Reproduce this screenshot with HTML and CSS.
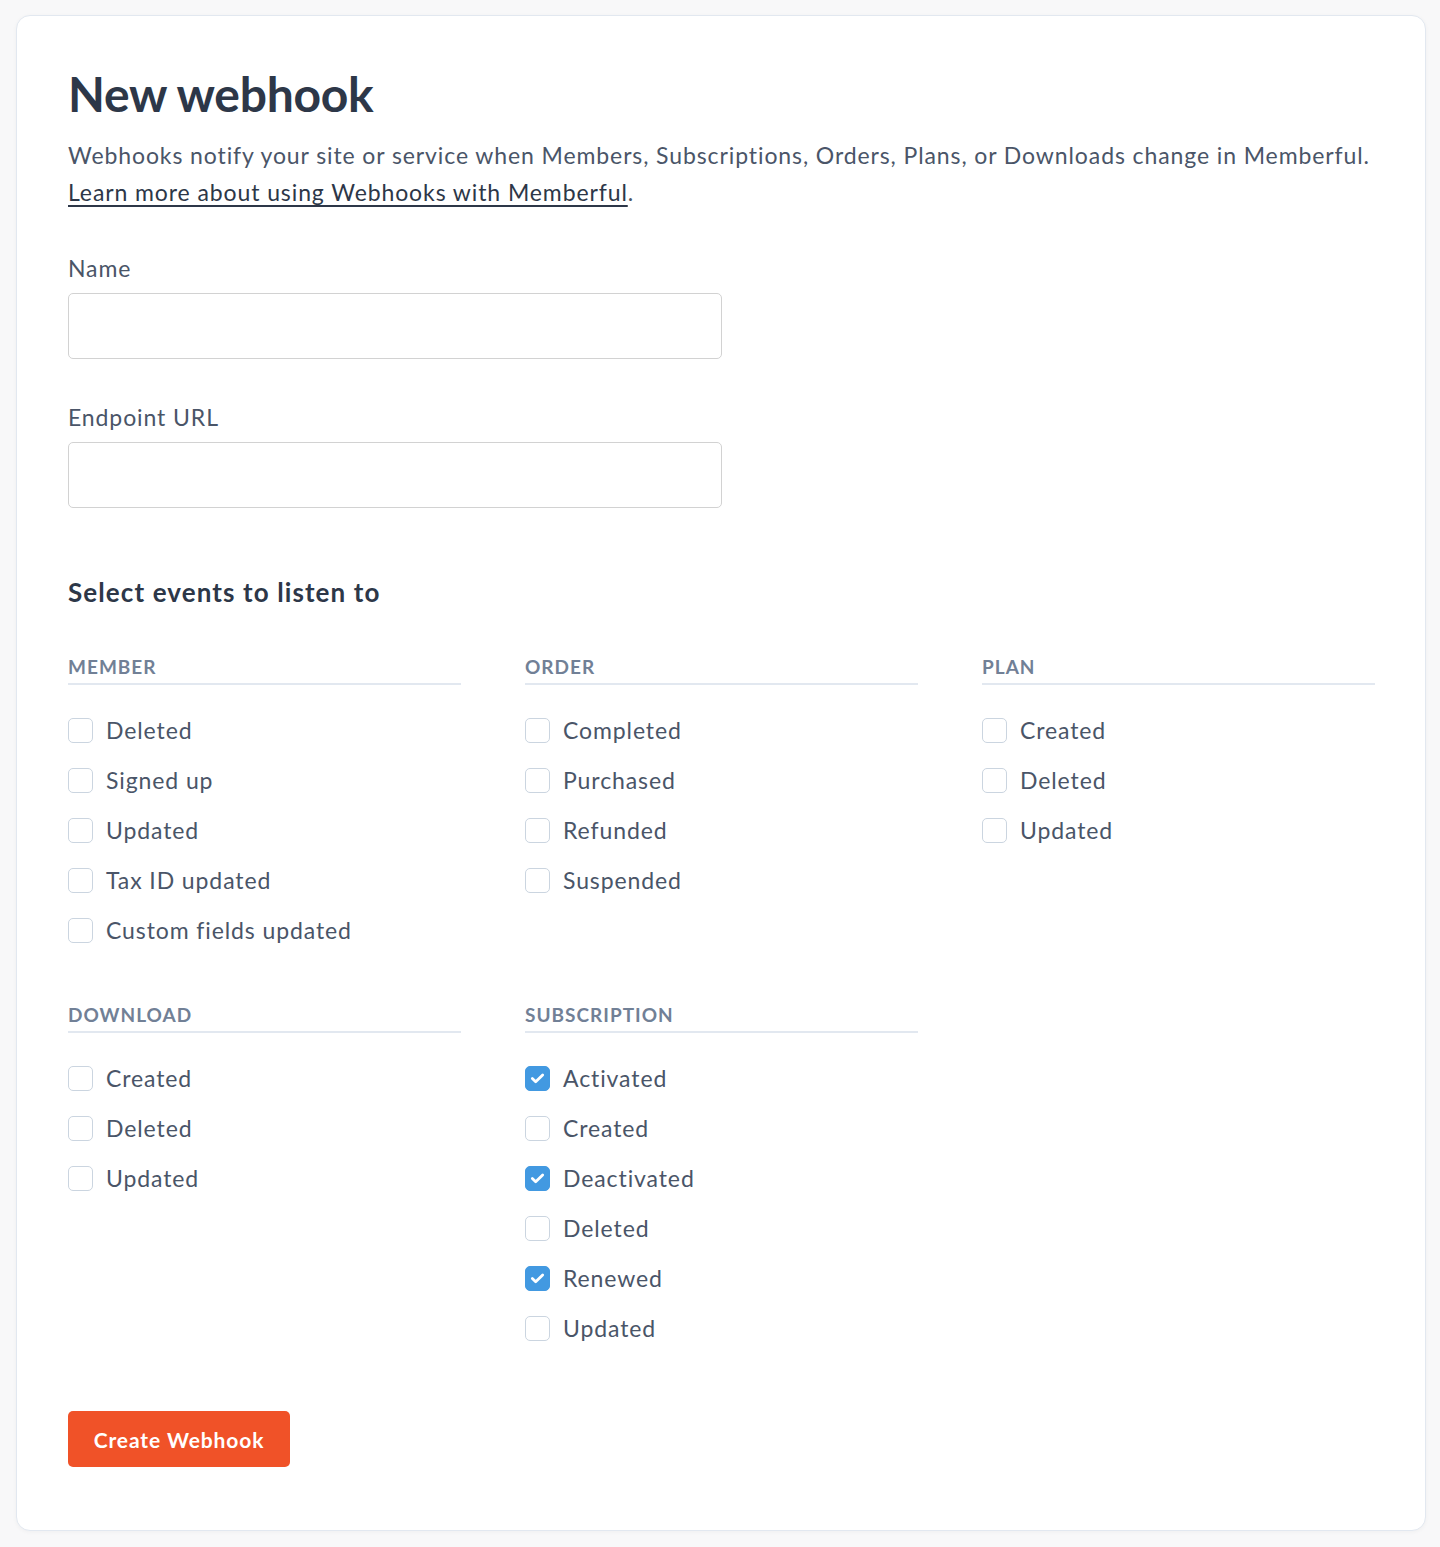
FILE: index.html
```html
<!DOCTYPE html>
<html lang="en">
<head>
<meta charset="utf-8">
<title>New webhook</title>
<link rel="stylesheet" href="styles.css">
</head>
<body>
<div class="card">
  <h1 class="title">New webhook</h1>
  <p class="desc">Webhooks notify your site or service when Members, Subscriptions, Orders, Plans, or Downloads change in Memberful.<br><a href="#" class="link">Learn more about using Webhooks with Memberful</a>.</p>

  <div class="field">
    <label class="label">Name</label>
    <input class="input" type="text">
  </div>
  <div class="field">
    <label class="label">Endpoint URL</label>
    <input class="input" type="text">
  </div>

  <h2 class="subtitle">Select events to listen to</h2>

  <div class="groups">
    <div class="group">
      <div class="group-head">Member</div>
      <label class="opt"><span class="box"></span>Deleted</label>
      <label class="opt"><span class="box"></span>Signed up</label>
      <label class="opt"><span class="box"></span>Updated</label>
      <label class="opt"><span class="box"></span>Tax ID updated</label>
      <label class="opt"><span class="box"></span>Custom fields updated</label>
    </div>
    <div class="group">
      <div class="group-head">Order</div>
      <label class="opt"><span class="box"></span>Completed</label>
      <label class="opt"><span class="box"></span>Purchased</label>
      <label class="opt"><span class="box"></span>Refunded</label>
      <label class="opt"><span class="box"></span>Suspended</label>
    </div>
    <div class="group">
      <div class="group-head">Plan</div>
      <label class="opt"><span class="box"></span>Created</label>
      <label class="opt"><span class="box"></span>Deleted</label>
      <label class="opt"><span class="box"></span>Updated</label>
    </div>
    <div class="group">
      <div class="group-head">Download</div>
      <label class="opt"><span class="box"></span>Created</label>
      <label class="opt"><span class="box"></span>Deleted</label>
      <label class="opt"><span class="box"></span>Updated</label>
    </div>
    <div class="group">
      <div class="group-head">Subscription</div>
      <label class="opt"><span class="box checked"><svg viewBox="0 0 24 24" width="24" height="24"><path d="M6.6 12.6l3.5 3.4L17.4 8.8" fill="none" stroke="#fff" stroke-width="2.9" stroke-linecap="round" stroke-linejoin="round"/></svg></span>Activated</label>
      <label class="opt"><span class="box"></span>Created</label>
      <label class="opt"><span class="box checked"><svg viewBox="0 0 24 24" width="24" height="24"><path d="M6.6 12.6l3.5 3.4L17.4 8.8" fill="none" stroke="#fff" stroke-width="2.9" stroke-linecap="round" stroke-linejoin="round"/></svg></span>Deactivated</label>
      <label class="opt"><span class="box"></span>Deleted</label>
      <label class="opt"><span class="box checked"><svg viewBox="0 0 24 24" width="24" height="24"><path d="M6.6 12.6l3.5 3.4L17.4 8.8" fill="none" stroke="#fff" stroke-width="2.9" stroke-linecap="round" stroke-linejoin="round"/></svg></span>Renewed</label>
      <label class="opt"><span class="box"></span>Updated</label>
    </div>
  </div>

  <button class="btn" type="button">Create Webhook</button>
</div>
</body>
</html>
```

FILE: styles.css
```css
* { box-sizing: border-box; }
html, body { margin: 0; padding: 0; }
body {
  background: #f8f8f9;
  font-family: Lato, "Open Sans", Arial, sans-serif;
  color: #2d3748;
  padding: 15px 14px 17px 16px;
}
.card {
  background: #fff;
  border: 1px solid #e2e8f0;
  border-radius: 14px;
  box-shadow: 0 1px 4px rgba(0,0,0,0.04);
  padding: 49px 51px 63px 51px;
}
.title {
  margin: 0;
  font-size: 48px;
  font-weight: 700;
  line-height: 57px;
  color: #2d3748;
  letter-spacing: -0.3px;
}
.desc {
  margin: 15px 0 0;
  font-size: 23px;
  line-height: 37px;
  letter-spacing: 0.9px;
  color: #4a5568;
}
.link { color: #2d3748; text-decoration: underline; text-underline-offset: 4px; text-decoration-thickness: 1.5px; }
.field { margin-top: 42px; display: flex; flex-direction: column; }
.field + .field { margin-top: 43px; }
.label {
  font-size: 23px;
  line-height: 30px;
  letter-spacing: 0.9px;
  color: #4a5568;
  margin-bottom: 10px;
}
.input {
  width: 654px;
  height: 66px;
  border: 1.5px solid #d2d2d2;
  border-radius: 5px;
  background: #fff;
  font: inherit;
}
.subtitle {
  margin: 68px 0 0;
  font-size: 26px;
  font-weight: 700;
  line-height: 32px;
  letter-spacing: 1.1px;
  color: #2d3748;
}
.groups {
  margin-top: 47px;
  display: grid;
  grid-template-columns: repeat(3, 393px);
  column-gap: 64px;
  row-gap: 48px;
}
.group { display: flex; flex-direction: column; }
.group-head {
  text-transform: uppercase;
  font-size: 19px;
  font-weight: 700;
  letter-spacing: 1px;
  color: #718096;
  line-height: 24px;
  padding-bottom: 4px;
  border-bottom: 2px solid #e2e8f0;
  margin-bottom: 20px;
}
.opt {
  display: flex;
  align-items: center;
  height: 50px;
  font-size: 23px;
  letter-spacing: 0.9px;
  color: #4a5568;
}
.box {
  width: 25px;
  height: 25px;
  border: 1.5px solid #cbd5e0;
  border-radius: 5px;
  margin-right: 13px;
  flex: none;
  display: flex;
  align-items: center;
  justify-content: center;
  background: #fff;
}
.box.checked { background: #4299e1; border-color: #4299e1; }
.box svg { display: block; }
.btn {
  margin-top: 58px;
  width: 222px;
  height: 56px;
  background: #f05228;
  color: #fff;
  border: none;
  border-radius: 5px;
  font-family: inherit;
  font-size: 21px;
  font-weight: 700;
  letter-spacing: 0.9px;
}
```
